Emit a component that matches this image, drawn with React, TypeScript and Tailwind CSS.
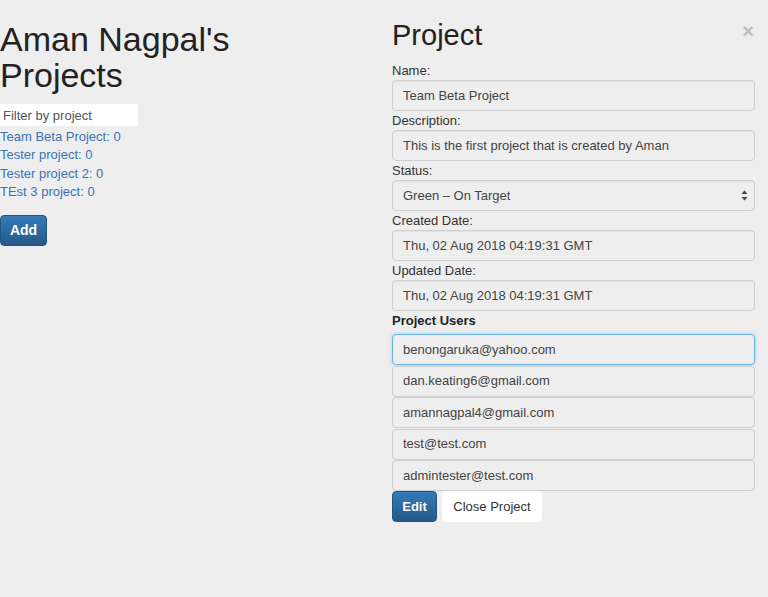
import React from 'react';

const projects = ['Team Beta Project: 0', 'Tester project: 0', 'Tester project 2: 0', 'TEst 3 project: 0'];

const users = [
  'benongaruka@yahoo.com',
  'dan.keating6@gmail.com',
  'amannagpal4@gmail.com',
  'test@test.com',
  'admintester@test.com',
];

const fields = [
  { label: 'Name:', value: 'Team Beta Project' },
  { label: 'Description:', value: 'This is the first project that is created by Aman' },
  { label: 'Status:', value: 'Green – On Target', select: true },
  { label: 'Created Date:', value: 'Thu, 02 Aug 2018 04:19:31 GMT' },
  { label: 'Updated Date:', value: 'Thu, 02 Aug 2018 04:19:31 GMT' },
];

const font = { fontFamily: '"Liberation Sans", Arial, sans-serif' };

function Field({ label, value, select }: { label: string; value: string; select?: boolean }) {
  return (
    <div className="flex flex-col">
      <label className="h-[19px] text-[13px] leading-[19px] text-[#333]">{label}</label>
      <div className="flex h-[31px] items-center justify-between rounded-[4px] border border-[#cfcfcf] bg-[#eeeeee] pl-[10px] pr-[6px] text-[13px] text-[#444] shadow-[inset_0_1px_1px_rgba(0,0,0,0.05)]">
        <span>{value}</span>
        {select ? (
          <svg width="7" height="11" viewBox="0 0 7 11" className="text-[#444]">
            <path d="M3.5 0.5 L6.5 4 L0.5 4 Z" fill="currentColor" />
            <path d="M3.5 10.5 L6.5 7 L0.5 7 Z" fill="currentColor" />
          </svg>
        ) : null}
      </div>
    </div>
  );
}

export default function App() {
  return (
    <div className="min-h-[597px] w-full bg-[#eeeeee] text-[#333]" style={font}>
      <div className="flex">
        {/* project list */}
        <div className="w-[392px] shrink-0">
          <h1 className="mt-[21px] text-[34px] leading-[36px] font-normal text-[#222]">
            Aman Nagpal's
            <br />
            Projects
          </h1>
          <input
            type="text"
            placeholder="Filter by project"
            className="mt-[11px] h-[22px] w-[138px] bg-white px-[3px] text-[13px] text-[#333] outline-none placeholder:text-[#555]"
          />
          <ul className="mt-[1px] flex flex-col">
            {projects.map((p) => (
              <li key={p} className="text-[13px] leading-[18.6px] text-[#3a73b5]">
                {p}
              </li>
            ))}
          </ul>
          <button
            type="button"
            className="mt-[13px] h-[31px] w-[47px] rounded-[4px] border border-[#245580] bg-gradient-to-b from-[#337ab7] to-[#265a88] text-[14px] font-bold text-white"
          >
            Add
          </button>
        </div>

        {/* project details */}
        <div className="w-[363px] shrink-0">
          <div className="relative mt-[19px] h-[42px]">
            <h2 className="text-[29px] leading-[33px] font-normal text-[#222]">Project</h2>
            <span className="absolute right-[1px] top-[2px] text-[20px] leading-[20px] font-bold text-[#bdbdbd]">×</span>
          </div>
          <div className="flex flex-col">
            {fields.map((f) => (
              <Field key={f.label} label={f.label} value={f.value} select={f.select} />
            ))}
          </div>
          <div className="h-[19px] text-[13px] leading-[19px] font-bold text-[#222]">Project Users</div>
          <div className="mt-[4px] flex flex-col">
            {users.map((u, i) => (
              <div
                key={u}
                className={
                  i === 0
                    ? 'flex h-[31px] items-center rounded-[4px] border border-[#66afe9] bg-[#eeeeee] pl-[10px] text-[13px] text-[#444] shadow-[0_0_4px_rgba(102,175,233,0.5)]'
                    : 'mt-[0.5px] flex h-[31px] items-center rounded-[4px] border border-[#cfcfcf] bg-[#eeeeee] pl-[10px] text-[13px] text-[#444]'
                }
              >
                {u}
              </div>
            ))}
          </div>
          <div className="flex gap-[5px]">
            <button
              type="button"
              className="h-[31px] w-[45px] rounded-[4px] border border-[#245580] bg-gradient-to-b from-[#337ab7] to-[#265a88] text-[13px] font-bold text-white"
            >
              Edit
            </button>
            <button type="button" className="h-[31px] w-[100px] rounded-[4px] bg-white text-[13px] text-[#333]">
              Close Project
            </button>
          </div>
        </div>
      </div>
    </div>
  );
}
